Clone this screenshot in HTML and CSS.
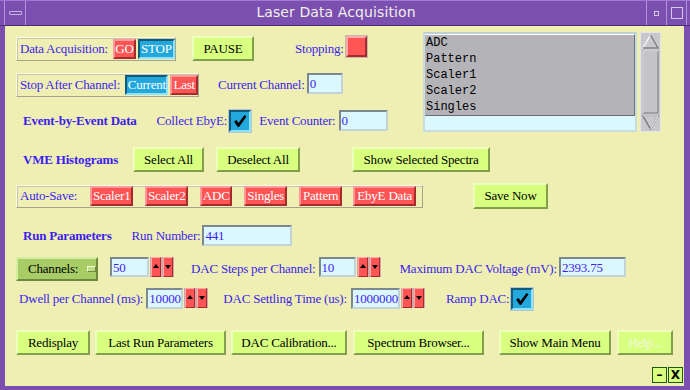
FILE: index.html
```html
<!DOCTYPE html>
<html>
<head>
<title>Laser Data Acquisition</title>
<link rel="stylesheet" href="styles.css">
</head>
<body>
<div class="window">
  <div class="titlebar">
    <div class="tb-menu"><span class="dash"></span></div>
    <div class="tb-title">Laser Data Acquisition</div>
    <div class="tb-min"><span class="dot"></span></div>
    <div class="tb-max"><span class="sq"></span></div>
  </div>
  <div class="main">
    <div class="top">
      <div class="top-left">
        <div class="row r1">
          <div class="frame f-acq">
            <span class="lbl">Data Acquisition:</span>
            <span class="tbtn red w-go">GO</span>
            <span class="tbtn blue w-stop">STOP</span>
          </div>
          <span class="btn w-pause">PAUSE</span>
          <span class="lbl m-stopping">Stopping:</span>
          <span class="indicator"></span>
        </div>
        <div class="row r2">
          <div class="frame f-stop">
            <span class="lbl">Stop After Channel:</span>
            <span class="tbtn blue w-cur">Current</span>
            <span class="tbtn red w-last">Last</span>
          </div>
          <span class="lbl m-curch">Current Channel:</span>
          <span class="entry w-curch">0</span>
        </div>
        <div class="row r3">
          <span class="head">Event-by-Event Data</span>
          <span class="lbl m-collect">Collect EbyE:</span>
          <span class="check">
            <svg width="16" height="16" viewBox="0 0 16 16"><path d="M2 8.5 L4.5 7 L6.5 10 L12.5 2 L14.5 3.5 L7 14 L5.8 14 Z" fill="#000"/></svg>
          </span>
          <span class="lbl m-evc">Event Counter:</span>
          <span class="entry w-evc">0</span>
        </div>
      </div>
      <div class="listwrap">
        <div class="listbox">
          <div class="items">
            <div>ADC</div>
            <div>Pattern</div>
            <div>Scaler1</div>
            <div>Scaler2</div>
            <div>Singles</div>
          </div>
        </div>
        <div class="scrollbar">
          <svg width="21" height="100" viewBox="0 0 21 100">
            <rect x="0.5" y="0.5" width="20" height="99" fill="#c9c9cd" stroke="#e4e4e6"/>
            <polygon points="3,16 10.5,3 18,16" fill="#c9c9cd" stroke="#f4f4f4" stroke-width="1.5"/>
            <polyline points="3,16 18,16 10.5,3" fill="none" stroke="#7a7a7e" stroke-width="1.5"/>
            <rect x="3" y="19" width="15" height="62" fill="#c4c4c8" stroke="#7a7a7e"/>
            <polyline points="3,81 3,19 18,19" fill="none" stroke="#f4f4f4"/>
            <polygon points="3,84 18,84 10.5,97" fill="#c9c9cd" stroke="#7a7a7e" stroke-width="1.5"/>
            <polyline points="3,84 18,84 10.5,97" fill="none" stroke="#f4f4f4" stroke-width="1"/>
          </svg>
        </div>
      </div>
    </div>
    <div class="row r4">
      <span class="head">VME Histograms</span>
      <span class="btn w-selall">Select All</span>
      <span class="btn w-desel">Deselect All</span>
      <span class="btn w-showsel">Show Selected Spectra</span>
    </div>
    <div class="row r5">
      <div class="frame f-auto">
        <span class="lbl">Auto-Save:</span>
        <span class="tbtn red a1">Scaler1</span>
        <span class="tbtn red a2">Scaler2</span>
        <span class="tbtn red a3">ADC</span>
        <span class="tbtn red a4">Singles</span>
        <span class="tbtn red a5">Pattern</span>
        <span class="tbtn red a6">EbyE Data</span>
      </div>
      <span class="btn w-save">Save Now</span>
    </div>
    <div class="row r6">
      <span class="head">Run Parameters</span>
      <span class="lbl m-runno">Run Number:</span>
      <span class="entry w-runno">441</span>
    </div>
    <div class="row r7">
      <span class="menubtn">Channels:<span class="mind"></span></span>
      <span class="entry w-chan">50</span>
      <span class="spin"><span class="arr up"></span><span class="arr down"></span></span>
      <span class="lbl m-steps">DAC Steps per Channel:</span>
      <span class="entry w-steps">10</span>
      <span class="spin"><span class="arr up"></span><span class="arr down"></span></span>
      <span class="lbl m-maxv">Maximum DAC Voltage (mV):</span>
      <span class="entry w-maxv">2393.75</span>
    </div>
    <div class="row r8">
      <span class="lbl m-dwell">Dwell per Channel (ms):</span>
      <span class="entry w-dwell">10000</span>
      <span class="spin"><span class="arr up"></span><span class="arr down"></span></span>
      <span class="lbl m-settle">DAC Settling Time (us):</span>
      <span class="entry w-settle">1000000</span>
      <span class="spin"><span class="arr up"></span><span class="arr down"></span></span>
      <span class="lbl m-ramp">Ramp DAC:</span>
      <span class="check">
        <svg width="16" height="16" viewBox="0 0 16 16"><path d="M2 8.5 L4.5 7 L6.5 10 L12.5 2 L14.5 3.5 L7 14 L5.8 14 Z" fill="#000"/></svg>
      </span>
    </div>
    <div class="row r9">
      <span class="btn w-redisp">Redisplay</span>
      <span class="btn w-lastrun">Last Run Parameters</span>
      <span class="btn w-daccal">DAC Calibration...</span>
      <span class="btn w-spec">Spectrum Browser...</span>
      <span class="btn w-mainmenu">Show Main Menu</span>
      <span class="btn disabled w-help">Help...</span>
    </div>
    <div class="footer">
      <span class="small">&ndash;</span>
      <span class="small">X</span>
    </div>
  </div>
</div>
</body>
</html>
```

FILE: styles.css
```css
html, body {
    margin: 0;
    padding: 0;
    background: #7a4fb0;
}
.window {
    width: 690px;
    height: 390px;
    box-sizing: border-box;
    background: #7a4fb0;
    border-top: 1px solid #a07ad0;
    padding: 0 6px 5px 5px;
    font-family: "Liberation Serif", "DejaVu Serif", serif;
    font-size: 13px;
    letter-spacing: -0.2px;
}
.titlebar {
    height: 24px;
    display: flex;
    align-items: stretch;
    margin-left: -5px;
    margin-right: -6px;
    border-bottom: 1px solid #4a2c78;
}
.tb-menu {
    width: 20px;
    margin-left: 4px;
    border-left: 1px solid #b394dc;
    border-right: 1px solid #b394dc;
    display: flex;
    align-items: center;
    justify-content: center;
}
.dash {
    width: 11px;
    height: 2px;
    border: 1px solid #c8b2e6;
    border-radius: 1px;
}
.tb-title {
    flex: 1;
    text-align: center;
    color: #f2f0e8;
    font-family: "DejaVu Sans", sans-serif;
    font-size: 14px;
    line-height: 23px;
    letter-spacing: 0.1px;
}
.tb-min, .tb-max {
    width: 19px;
    border-left: 1px solid #b394dc;
    display: flex;
    align-items: center;
    justify-content: center;
}
.tb-max {
    margin-right: 3px;
    border-right: 1px solid #b394dc;
}
.dot {
    width: 3px;
    height: 3px;
    border: 1px solid #d8c8ee;
}
.sq {
    width: 10px;
    height: 10px;
    border: 1px solid #d8c8ee;
}
.main {
    height: 360px;
    background: #efefb3;
    box-sizing: border-box;
    padding: 6px 0 0 11px;
    color: #3c1ef0;
}
.top {
    display: flex;
}
.top-left {
    width: 407px;
    padding-top: 4px;
}
.row {
    display: flex;
    align-items: center;
}
.r1 { height: 25px; }
.r2 { height: 24px; margin-top: 12px; }
.r3 { height: 21px; margin-top: 13px; }
.r4 { height: 25px; margin-top: 15px; }
.r5 { height: 26px; margin-top: 11px; }
.r6 { height: 21px; margin-top: 16px; }
.r7 { height: 24px; margin-top: 11px; }
.r8 { height: 21px; margin-top: 7px; }
.r9 { height: 25px; margin-top: 21px; }

.lbl {
    white-space: nowrap;
}
.head {
    font-weight: bold;
    margin-left: 7px;
    white-space: nowrap;
}
.frame {
    display: flex;
    align-items: center;
    height: 24px;
    box-sizing: border-box;
    border: 1px solid #a4a48c;
    border-top-color: #fbfbe8;
    border-left-color: #fbfbe8;
    box-shadow: inset 1px 1px 0 #c8c8a8;
    padding-left: 3px;
}
.f-acq { width: 160px; }
.f-stop { width: 183px; }
.f-auto { width: 407px; height: 23px; }

.tbtn {
    display: inline-block;
    box-sizing: border-box;
    height: 20px;
    line-height: 16px;
    text-align: center;
    color: #ffffff;
    border: 2px solid;
    white-space: nowrap;
}
.red {
    background: #ff5555;
    border-color: #ff9a9a #a42c2c #a42c2c #ff9a9a;
}
.blue {
    background: #22a8dd;
    border-color: #125a7a #8ee4ff #8ee4ff #125a7a;
}
.w-go { width: 23px; margin-left: 5px; }
.w-stop { width: 37px; margin-left: 2px; }
.w-cur { width: 44px; margin-left: 5px; }
.w-last { width: 28px; margin-left: 2px; }
.a1 { width: 43px; margin-left: 13px; }
.a2 { width: 43px; margin-left: 12px; }
.a3 { width: 32px; margin-left: 12px; }
.a4 { width: 43px; margin-left: 12px; }
.a5 { width: 43px; margin-left: 12px; }
.a6 { width: 63px; margin-left: 11px; }

.btn {
    display: inline-block;
    box-sizing: border-box;
    height: 25px;
    line-height: 21px;
    text-align: center;
    color: #000000;
    background: #d8ff80;
    border: 2px solid;
    border-color: #ecffbc #82a04c #82a04c #ecffbc;
    white-space: nowrap;
}
.btn.disabled { color: #f4f8e0; }
.w-pause { width: 62px; margin-left: 16px; }
.w-selall { width: 71px; margin-left: 15px; }
.w-desel { width: 84px; margin-left: 12px; }
.w-showsel { width: 138px; margin-left: 52px; }
.w-save { width: 75px; margin-left: 50px; height: 26px; }
.w-redisp { width: 74px; }
.w-lastrun { width: 131px; margin-left: 5px; }
.w-daccal { width: 116px; margin-left: 5px; }
.w-spec { width: 131px; margin-left: 6px; }
.w-mainmenu { width: 112px; margin-left: 15px; }
.w-help { width: 56px; margin-left: 6px; }

.m-stopping { margin-left: 41px; }
.indicator {
    width: 21px;
    height: 21px;
    box-sizing: border-box;
    margin-left: 2px;
    align-self: flex-start;
    background: #ff5555;
    border: 2px solid;
    border-color: #ffaaaa #a42c2c #a42c2c #ffaaaa;
    box-shadow: 0 0 0 1px #c8b8a8;
}

.entry {
    display: inline-block;
    box-sizing: border-box;
    height: 21px;
    line-height: 17px;
    padding-left: 1px;
    background: #dcf8ff;
    border: 2px solid;
    border-color: #7c8890 #c2d4d8 #c2d4d8 #7c8890;
    white-space: nowrap;
    overflow: hidden;
}
.m-curch { margin-left: 19px; }
.w-curch { width: 36px; margin-left: 2px; align-self: flex-start; }
.m-collect { margin-left: 20px; }
.m-evc { margin-left: 8px; }
.w-evc { width: 49px; margin-left: 3px; }
.m-runno { margin-left: 20px; }
.w-runno { width: 90px; margin-left: 2px; }
.w-chan { width: 39px; margin-left: 12px; align-self: flex-start; height: 20px; }
.m-steps { margin-left: 17px; }
.w-steps { width: 37px; margin-left: 3px; align-self: flex-start; height: 20px; }
.m-maxv { margin-left: 19px; }
.w-maxv { width: 67px; margin-left: 2px; align-self: flex-start; height: 20px; }
.m-dwell { margin-left: 3px; }
.w-dwell { width: 37px; margin-left: 3px; }
.m-settle { margin-left: 15px; }
.w-settle { width: 49px; margin-left: 4px; }
.m-ramp { margin-left: 21px; }

.check {
    width: 22px;
    height: 22px;
    box-sizing: border-box;
    margin-left: 2px;
    background: #22a8dd;
    border: 2px solid;
    border-color: #125a7a #8ee4ff #8ee4ff #125a7a;
    box-shadow: 0 0 0 1px #b8c4c8;
    display: flex;
    align-items: center;
    justify-content: center;
}

.menubtn {
    display: flex;
    align-items: center;
    box-sizing: border-box;
    width: 82px;
    height: 24px;
    padding-left: 10px;
    color: #000000;
    background: #a8cc66;
    border: 2px solid;
    border-color: #d4eea0 #6c8a3c #6c8a3c #d4eea0;
}
.mind {
    width: 12px;
    height: 4px;
    margin-left: 9px;
    background: #c0dc88;
    border: 1px solid;
    border-color: #f0ffd0 #6c8a3c #6c8a3c #f0ffd0;
}
.spin {
    display: flex;
    align-self: flex-start;
    margin-left: 1px;
    height: 20px;
    padding: 0 1px;
    background: #d0a8a8;
}
.arr {
    width: 10px;
    height: 20px;
    box-sizing: border-box;
    margin-right: 2px;
    background: #ff5555;
    border: 1px solid;
    border-color: #ffaaaa #a42c2c #a42c2c #ffaaaa;
    position: relative;
}
.arr:last-child { margin-right: 0; }
.arr::after {
    content: "";
    position: absolute;
    left: 1px;
    width: 0;
    height: 0;
    border-left: 3px solid transparent;
    border-right: 3px solid transparent;
}
.arr.up::after {
    top: 6px;
    border-bottom: 4px solid #000000;
}
.arr.down::after {
    top: 7px;
    border-top: 4px solid #000000;
}

.listwrap {
    display: flex;
}
.listbox {
    width: 214px;
    height: 100px;
    box-sizing: border-box;
    border: 2px solid #c8dde2;
    border-top-color: #bcd0d4;
    background: #dcf8ff;
}
.items {
    background: #b4b4b8;
    border-top: 1px solid #ffffff;
    border-right: 1px solid #6e6e72;
    border-bottom: 1px solid #6e6e72;
    font-family: "Liberation Mono", "DejaVu Sans Mono", monospace;
    font-size: 12px;
    letter-spacing: 0;
    color: #000000;
    padding-left: 1px;
}
.items div {
    height: 16px;
    line-height: 16px;
}
.scrollbar {
    margin-left: 3px;
    height: 100px;
}

.footer {
    display: flex;
    justify-content: flex-end;
    margin-top: 12px;
    margin-right: 1px;
    gap: 1px;
}
.small {
    width: 15px;
    height: 16px;
    box-sizing: border-box;
    background: #d8ff80;
    border: 1px solid #1c5a10;
    color: #000000;
    font-family: "DejaVu Sans", sans-serif;
    font-weight: bold;
    font-size: 12px;
    letter-spacing: 0;
    line-height: 14px;
    text-align: center;
}
```
